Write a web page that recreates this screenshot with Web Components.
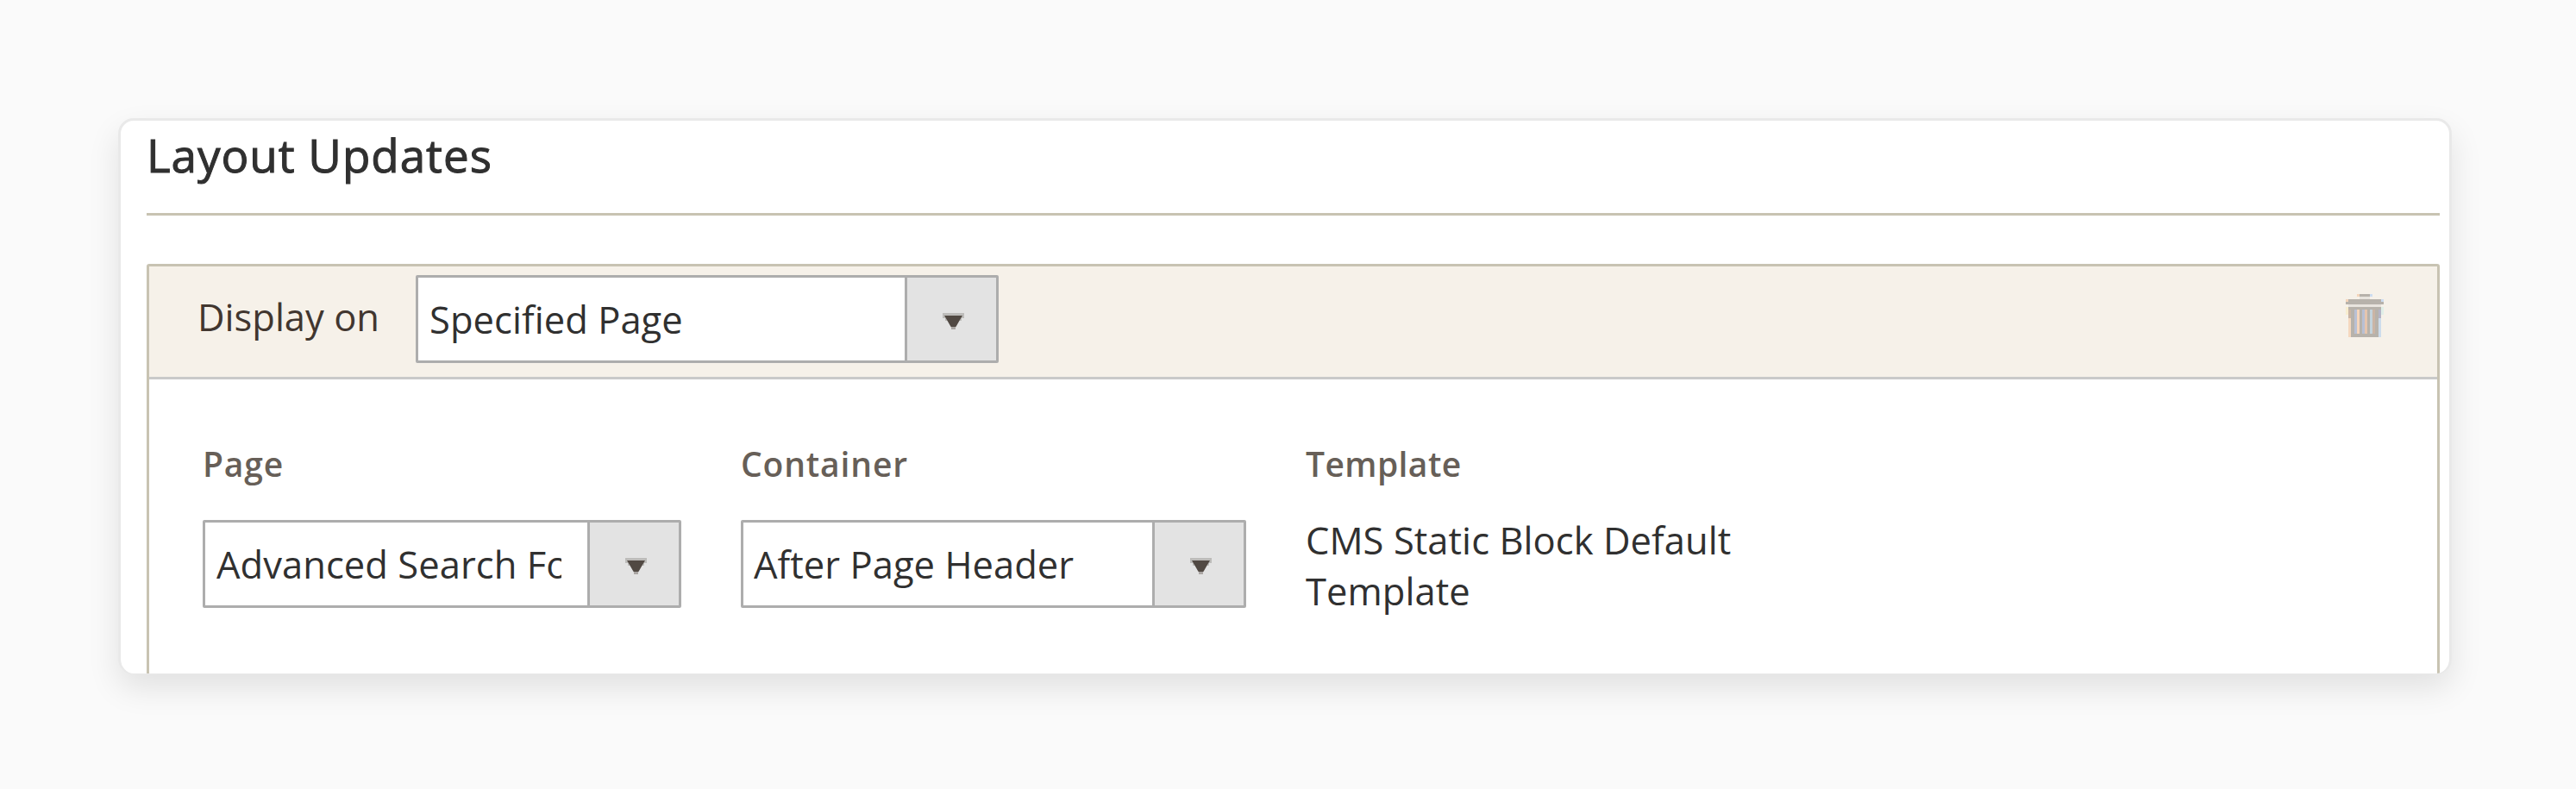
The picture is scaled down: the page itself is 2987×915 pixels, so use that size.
<!DOCTYPE html>
<html lang="en">
<head>
<meta charset="utf-8">
<title>Layout Updates</title>
<style>
    body {
        margin: 0;
        background: #fafafa;
        font-family: "Open Sans", sans-serif;
    }
</style>
</head>
<body>
<layout-updates heading="Layout Updates">
    <layout-rule label="Display on">
        <select-box slot="display" style="width: 676px" value="Specified Page"></select-box>
        <rule-field label="Page" style="width: 624px">
            <select-box style="width: 555px; --clip: 400px" value="Advanced Search Fo"></select-box>
        </rule-field>
        <rule-field label="Container" style="width: 655px">
            <select-box style="width: 586px; --pad: 12px" value="After Page Header"></select-box>
        </rule-field>
        <rule-field label="Template" style="width: 560px; --track: .4px">
            <static-text>CMS Static Block Default Template</static-text>
        </rule-field>
    </layout-rule>
</layout-updates>

<script>
function attach(el, html) {
    const template = document.createElement('template');
    template.innerHTML = html;
    const root = el.attachShadow({ mode: 'open' });
    root.appendChild(template.content.cloneNode(true));
    return root;
}

class LayoutUpdates extends HTMLElement {
    constructor() {
        super();
        this.$root = attach(this, `
            <style>
                :host {
                    display: flex;
                    box-sizing: border-box;
                    height: 915px;
                    padding: 137px 144px 131px 137px;
                }
                section {
                    flex: 1;
                    box-sizing: border-box;
                    height: 645px;
                    padding: 0 11px 0 30px;
                    overflow: hidden;
                    background: #fff;
                    border: 3px solid #e9e9e9;
                    border-bottom-width: 1px;
                    border-radius: 18px;
                    box-shadow: 0 16px 36px rgba(0, 0, 0, .1);
                }
                h1 {
                    box-sizing: border-box;
                    height: 110px;
                    margin: 0 0 56px;
                    padding-top: 6px;
                    border-bottom: 3px solid #c8c3b2;
                    color: #303030;
                    font-size: 53px;
                    font-weight: 400;
                    line-height: 68px;
                    letter-spacing: .95px;
                    -webkit-text-stroke: 1px #303030;
                }
            </style>
            <section>
                <h1></h1>
                <slot></slot>
            </section>
        `);
    }

    connectedCallback() {
        this.$root.querySelector('h1').textContent = this.getAttribute('heading');
    }
}

class LayoutRule extends HTMLElement {
    constructor() {
        super();
        this.$root = attach(this, `
            <style>
                :host {
                    display: block;
                    box-sizing: border-box;
                    height: 520px;
                    border: 3px solid #c8c3b2;
                    border-radius: 3px;
                }
                header {
                    display: flex;
                    box-sizing: border-box;
                    height: 131px;
                    padding: 10px 61px 0 56px;
                    background: #f6f1e9;
                    border-bottom: 3px solid #c9c9c9;
                }
                label {
                    width: 253px;
                    padding-top: 20px;
                    color: #41362f;
                    font-size: 43.5px;
                    line-height: 58px;
                }
                trash-icon { margin: 20px 0 0 auto; }
                .fields {
                    display: flex;
                    padding: 74px 0 0 62px;
                }
            </style>
            <header>
                <label></label>
                <slot name="display"></slot>
                <trash-icon></trash-icon>
            </header>
            <div class="fields"><slot></slot></div>
        `);
    }

    connectedCallback() {
        this.$root.querySelector('label').textContent = this.getAttribute('label');
    }
}

class RuleField extends HTMLElement {
    constructor() {
        super();
        this.$root = attach(this, `
            <style>
                :host { display: block; flex: none; }
                label {
                    display: block;
                    height: 89px;
                    color: #675f58;
                    font-size: 39px;
                    font-weight: 600;
                    line-height: 48px;
                    letter-spacing: var(--track, .85px);
                }
            </style>
            <label></label>
            <slot></slot>
        `);
    }

    connectedCallback() {
        this.$root.querySelector('label').textContent = this.getAttribute('label');
    }
}

class SelectBox extends HTMLElement {
    static get observedAttributes() {
        return ['value'];
    }

    constructor() {
        super();
        this.$root = attach(this, `
            <style>
                :host {
                    display: flex;
                    flex: none;
                    box-sizing: border-box;
                    height: 102px;
                    background: #fff;
                    border: 3px solid #adadad;
                    border-radius: 2px;
                    color: #303030;
                    font-size: 43.5px;
                    line-height: 58px;
                    letter-spacing: .05px;
                }
                .value {
                    flex: 1;
                    min-width: 0;
                    padding: 20px 0 0 var(--pad, 13px);
                }
                span {
                    display: block;
                    max-width: var(--clip, 600px);
                    overflow: hidden;
                    white-space: nowrap;
                }
                .button {
                    display: flex;
                    align-items: center;
                    justify-content: center;
                    box-sizing: border-box;
                    width: 106px;
                    padding-left: 3px;
                    background: #e3e3e3;
                    border-left: 3px solid #adadad;
                }
                svg { display: block; margin-top: 5px; }
            </style>
            <div class="value"><span></span></div>
            <div class="button">
                <svg width="25" height="19" viewBox="0 0 25 19">
                    <path d="M0 0h25v6h-3v3H3V6H0z" fill="#bdbcba"/>
                    <path d="M2 3h21l-3 5-4 7-2 3h-3l-2-3-4-7z" fill="#514943"/>
                    <path d="M10 16h5v3h-5z" fill="#aaa6a3"/>
                </svg>
            </div>
        `);
    }

    attributeChangedCallback(name, oldValue, newValue) {
        this.$root.querySelector('span').textContent = newValue;
    }
}

class StaticText extends HTMLElement {
    constructor() {
        super();
        attach(this, `
            <style>
                :host {
                    display: block;
                    margin-top: -6px;
                    color: #303030;
                    font-size: 43.5px;
                    line-height: 59px;
                    letter-spacing: .05px;
                }
            </style>
            <slot></slot>
        `);
    }
}

class TrashIcon extends HTMLElement {
    constructor() {
        super();
        attach(this, `
            <style>
                :host { display: block; width: 46px; height: 52px; }
                svg { display: block; }
            </style>
            <svg width="46" height="52" viewBox="0 0 46 52" shape-rendering="crispEdges">
                <path d="M17 2h12v3H17z" fill="#b7b2ab"/>
                <path d="M14 2h3v3h-3z" fill="#f5d5bb"/>
                <path d="M29 2h3v3h-3z" fill="#cddcf0"/>
                <path d="M17 5h12v3H17zM4 14h38v3H4z" fill="#e8e4de"/>
                <path d="M1 8h3v3H1z" fill="#f5d5bb"/>
                <path d="M42 8h3v3h-3z" fill="#cddcf0"/>
                <path d="M4 8h38v6H4zM1 11h3v3H1zM42 11h3v3h-3zM4 17h38v3H4z" fill="#b7b2ab"/>
                <path d="M1 17h3v9H1z" fill="#f8edcf"/>
                <path d="M42 17h3v9h-3z" fill="#e0efe8"/>
                <path d="M4 20h3v10H4z" fill="#cbb5a5"/>
                <path d="M4 30h3v22H4z" fill="#f5d8bf"/>
                <path d="M39 20h3v10h-3z" fill="#b4b4c6"/>
                <path d="M39 30h3v22h-3z" fill="#cddcec"/>
                <path d="M7 20h32v32H7z" fill="#b7b2ab"/>
                <path d="M11 20h3v28h-3zM20 20h3v28h-3z" fill="#b8c0d4"/>
                <path d="M29 20h3v28h-3z" fill="#c3d3dc"/>
                <path d="M14 20h3v28h-3z" fill="#f5d5bb"/>
                <path d="M23 20h3v28h-3z" fill="#e5c5ad"/>
                <path d="M32 20h3v28h-3z" fill="#cbb5a5"/>
            </svg>
        `);
    }
}

customElements.define('layout-updates', LayoutUpdates);
customElements.define('layout-rule', LayoutRule);
customElements.define('rule-field', RuleField);
customElements.define('select-box', SelectBox);
customElements.define('static-text', StaticText);
customElements.define('trash-icon', TrashIcon);
</script>
</body>
</html>
